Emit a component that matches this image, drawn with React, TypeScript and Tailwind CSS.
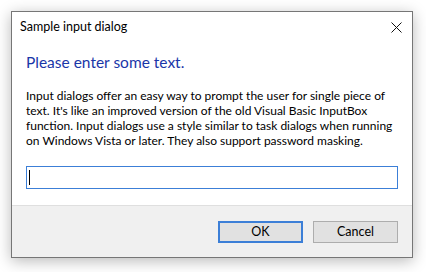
import React from "react";

const font = { fontFamily: 'Lato, "Noto Sans", Arial, sans-serif' };

function CloseIcon() {
  return (
    <svg width="11" height="11" viewBox="0 0 11 11" className="block">
      <path d="M0.5 0.5 L10.5 10.5 M10.5 0.5 L0.5 10.5" stroke="#111" strokeWidth="1" fill="none" />
    </svg>
  );
}

const lines = [
  "Input dialogs offer an easy way to prompt the user for single piece of",
  "text. It's like an improved version of the old Visual Basic InputBox",
  "function. Input dialogs use a style similar to task dialogs when running",
  "on Windows Vista or later. They also support password masking.",
];

export default function App() {
  return (
    <div className="w-[426px] h-[272px] bg-white p-[11px]" style={font}>
      <div className="w-[402px] h-[247px] flex flex-col bg-white border border-[#767676] shadow-[0_3px_14px_rgba(0,0,0,0.28)]">
        {/* title bar */}
        <div className="h-[30px] flex items-center justify-between pl-[8px] pr-[10px]">
          <span className="text-[12.5px] text-black">Sample input dialog</span>
          <CloseIcon />
        </div>

        {/* content */}
        <div className="flex-1 flex flex-col px-[14px] pt-[10px]">
          <h1 className="text-[15.5px] leading-[21px] text-[#1a36a8]">Please enter some text.</h1>
          <p className="mt-[15px] text-[12px] leading-[15px] text-black whitespace-nowrap">
            {lines.map((l) => (
              <span key={l} className="block">
                {l}
              </span>
            ))}
          </p>
          <div className="mt-[18px] h-[23px] border border-[#3c7fd7] flex items-center pl-[2px]">
            <span className="w-px h-[15px] bg-black" />
          </div>
        </div>

        {/* footer */}
        <div className="h-[52px] bg-[#f0f0f0] border-t border-[#dfdfdf] flex justify-end items-start pt-[15px] pr-[14px] gap-[10px]">
          <button className="w-[85px] h-[22px] bg-[#e1e1e1] border-2 border-[#3c7fd7] text-[12.5px] text-black leading-none">
            OK
          </button>
          <button className="w-[85px] h-[22px] bg-[#e1e1e1] border border-[#adadad] text-[12.5px] text-black leading-none">
            Cancel
          </button>
        </div>
      </div>
    </div>
  );
}
